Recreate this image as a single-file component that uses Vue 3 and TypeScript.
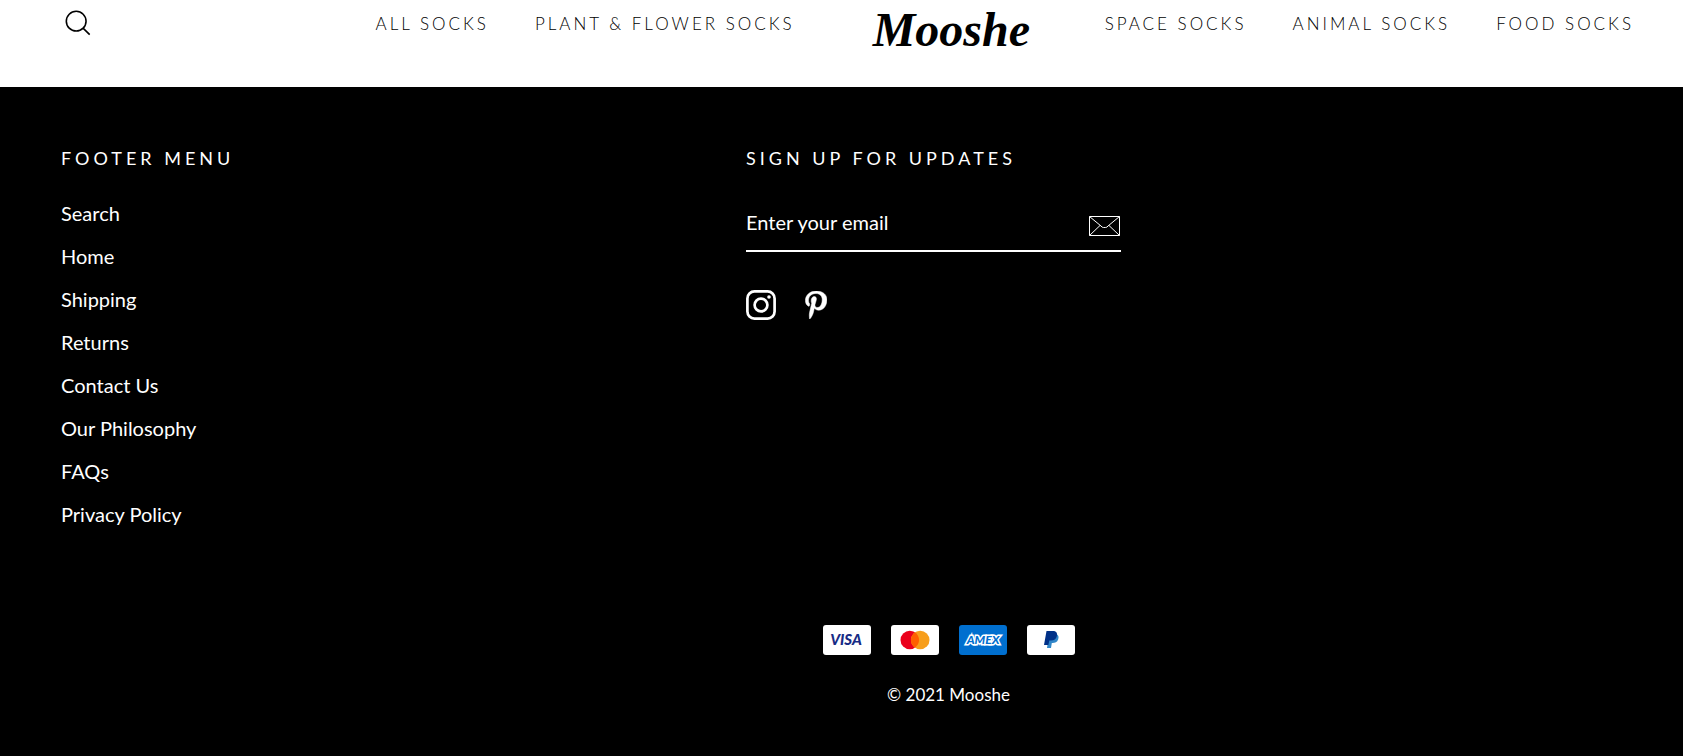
<script setup lang="ts">
import { ref } from 'vue'

const email = ref<string>('')
const leftNav: string[] = ['All Socks', 'Plant & Flower Socks']
const rightNav: string[] = ['Space Socks', 'Animal Socks', 'Food Socks']
const footerLinks: string[] = [
  'Search', 'Home', 'Shipping', 'Returns', 'Contact Us', 'Our Philosophy', 'FAQs', 'Privacy Policy',
]
</script>

<template>
  <div class="page">
    <header class="site-header">
      <button class="search" type="button" aria-label="Search">
        <svg width="34" height="34" viewBox="0 0 64 64" aria-hidden="true">
          <path d="M47.16 28.58A18.58 18.58 0 1 1 28.58 10a18.58 18.58 0 0 1 18.58 18.58zM54 54 41.94 42" />
        </svg>
      </button>
      <nav class="nav" aria-label="Shop">
        <a v-for="item in leftNav" :key="item" href="#">{{ item }}</a>
      </nav>
      <a class="logo" href="#">Mooshe</a>
      <nav class="nav" aria-label="More socks">
        <a v-for="item in rightNav" :key="item" href="#">{{ item }}</a>
      </nav>
    </header>

    <footer class="site-footer">
      <div class="columns">
        <section>
          <h2>Footer menu</h2>
          <ul class="links">
            <li v-for="item in footerLinks" :key="item"><a href="#">{{ item }}</a></li>
          </ul>
        </section>
        <section>
          <h2>Sign up for updates</h2>
          <form class="signup" @submit.prevent>
            <input v-model="email" type="email" placeholder="Enter your email" aria-label="Enter your email" />
            <button type="submit" aria-label="Subscribe">
              <svg width="32" height="22" viewBox="0 0 32 22" aria-hidden="true">
                <path d="M.5 1.5h30v19h-30zM.5 1.5l11.500 9.500q1 1.500 2.500 1.500h2q1.500 0 2.500-1.500l11.500-9.500M.5 20.500l10.500-10M30.500 20.500l-10.500-10" />
              </svg>
            </button>
          </form>
          <div class="social">
            <a href="#" aria-label="Instagram">
              <svg width="30" height="30" viewBox="0 0 30 30" aria-hidden="true">
                <rect x="1.400" y="1.400" width="27.200" height="27.200" rx="7" fill="none" stroke="#fff" stroke-width="2.700" />
                <circle cx="15" cy="15" r="6.400" fill="none" stroke="#fff" stroke-width="2.700" />
                <circle cx="23" cy="7" r="1.800" fill="#fff" />
              </svg>
            </a>
            <a href="#" aria-label="Pinterest">
              <svg width="22" height="28" viewBox="0 0 22 28" aria-hidden="true">
                <path fill="#fff" stroke="#fff" stroke-width=".5" d="M11.500 0C4.200 0 .4 4.900.4 9.300c0 2.700 1 5 3.200 5.900.4.200.7 0 .8-.4l.3-1.300c.1-.4.100-.5-.2-.9-.6-.8-1-1.700-1-3.100 0-4 2.900-7 7.400-7 4 0 6.300 2.600 6.300 6 0 4.500-1.900 8-4.800 8-1.600 0-2.800-1.300-2.400-3 .5-2 1.400-4.100 1.400-5.600 0-1.300-.7-2.400-2.100-2.400-1.700 0-3.100 1.800-3.100 4.200 0 1.500.5 2.600.5 2.600L4.600 21.300c-.6 2.500-.1 6.300 0 6.500 0 .2.300.3.400.1.200-.3 2.400-3 3.200-5.900l1.200-5c.6 1.200 2.400 2.200 4.200 2.200 5.500 0 8.300-5.300 8.300-10.700C21.900 3.700 17.700 0 11.500 0z" />
              </svg>
            </a>
          </div>
        </section>
      </div>

      <div class="closing">
        <ul class="payments">
          <li>
            <svg viewBox="0 0 48 30" role="img" aria-label="Visa">
              <rect width="48" height="30" rx="3" fill="#fff" />
              <text class="visa" x="23" y="20" text-anchor="middle">VISA</text>
            </svg>
          </li>
          <li>
            <svg viewBox="0 0 48 30" role="img" aria-label="Mastercard">
              <rect width="48" height="30" rx="3" fill="#fff" />
              <circle cx="18.800" cy="15" r="9.300" fill="#eb001b" />
              <circle cx="29.200" cy="15" r="9.300" fill="#f79e1b" />
              <path fill="#ff5f00" d="M24 7.300a9.300 9.300 0 0 1 0 15.400 9.300 9.300 0 0 1 0-15.400z" />
            </svg>
          </li>
          <li>
            <svg viewBox="0 0 48 30" role="img" aria-label="American Express">
              <rect width="48" height="30" rx="3" fill="#006fcf" />
              <text class="amex" x="24" y="19" text-anchor="middle">AMEX</text>
            </svg>
          </li>
          <li>
            <svg viewBox="0 0 48 30" role="img" aria-label="PayPal">
              <rect width="48" height="30" rx="3" fill="#fff" />
              <path fill="#3086c8" d="M22 9h7.500c2 1 2.600 3 1.600 5.600-.9 2.600-3 3.400-5.600 3.400h-.7l-.8 5h-4z" />
              <path fill="#003087" d="M19.500 6h6.300c3.300 0 4.800 1.700 4.100 4.900-.7 3.200-2.900 4.600-6 4.600h-1.600L21.400 20H17z" />
            </svg>
          </li>
        </ul>
        <p>© 2021 Mooshe</p>
      </div>
    </footer>
  </div>
</template>

<style>
body {
  margin: 0;
  background: #000;
}
</style>

<style scoped>
.page {
  color: #fff;
  font-family: Lato, "Open Sans", sans-serif;
  font-size: 20px;
}

a {
  color: inherit;
  text-decoration: none;
}

button {
  padding: 0;
  border: 0;
  background: none;
  color: inherit;
  cursor: pointer;
}

svg {
  display: block;
}

.site-header {
  display: flex;
  align-items: flex-start;
  height: 87px;
  padding: 0 49px 0 61px;
  box-sizing: border-box;
  background: #fff;
  color: #000;
}

.search {
  margin: 6px auto 0 0;
}

.search path,
.signup path {
  fill: none;
  stroke: currentColor;
  stroke-width: 3;
}

.signup path {
  stroke-width: 1;
}

.nav {
  display: flex;
  gap: 46px;
  padding-top: 12px;
  font-size: 17px;
  font-weight: 300;
  line-height: 24px;
  letter-spacing: 3px;
  text-transform: uppercase;
  white-space: nowrap;
}

.logo {
  width: 158px;
  margin: 0 74px 0 78px;
  font-family: "Brush Script MT", "Liberation Serif", cursive;
  font-size: 48px;
  font-style: italic;
  font-weight: 700;
  line-height: 60px;
}

.site-footer {
  padding: 58px 61px 40px;
  background: #000;
}

.columns {
  display: grid;
  grid-template-columns: 685px 375px;
}

h2 {
  margin: 0 0 28px;
  font-size: 18px;
  font-weight: 400;
  line-height: 26px;
  letter-spacing: 4px;
  text-transform: uppercase;
  white-space: nowrap;
}

ul {
  margin: 0;
  padding: 0;
  list-style: none;
}

.links {
  line-height: 43px;
  margin-top: -7px;
}

.signup {
  display: flex;
  align-items: center;
  height: 51px;
  border-bottom: 2px solid #fff;
}

.signup input {
  flex: 1;
  align-self: flex-start;
  height: 46px;
  min-width: 0;
  padding: 0;
  border: 0;
  outline: 0;
  background: none;
  color: #fff;
  font: inherit;
}

.signup input::placeholder {
  color: #fff;
  opacity: 1;
}

.signup button {
  margin-top: 2px;
}

.social {
  display: flex;
  align-items: center;
  gap: 29px;
  margin-top: 38px;
}

.closing {
  padding: 89px 0 0 214px;
  text-align: center;
}

.payments {
  display: flex;
  justify-content: center;
  gap: 20px;
}

.payments svg {
  width: 48px;
  height: 30px;
}

.visa {
  fill: #172b85;
  font: italic 900 15px Lato, sans-serif;
}

.amex {
  fill: #006fcf;
  stroke: #fff;
  stroke-width: 3;
  paint-order: stroke;
  font: italic 900 12px Lato, sans-serif;
}

.closing p {
  margin: 27px 0 0;
  font-size: 17px;
  line-height: 26px;
}
</style>
